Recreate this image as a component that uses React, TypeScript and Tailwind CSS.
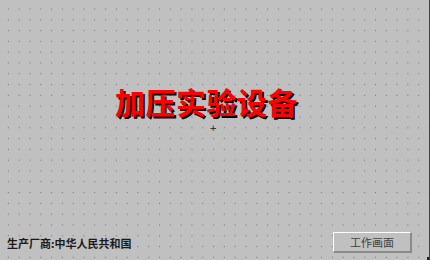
export default function App() {
  return (
    <div
      className="relative w-[430px] h-[260px] flex flex-col bg-[#c0c0c0] border-r border-[#404040] bg-[radial-gradient(circle,#777_0.6px,transparent_1px)] bg-[length:10.8px_10.8px] bg-[position:3px_3.6px] overflow-hidden"
      style={{ fontFamily: '"Liberation Sans", "Noto Sans CJK SC", sans-serif' }}
    >
      <div className="pt-[83px] pl-[115px]">
        <h1
          className="text-[30px] leading-[36px] font-bold text-[#ff0000] tracking-[0.5px] [text-shadow:2px_2px_0_#000]"
          style={{ fontFamily: '"Noto Sans CJK SC", sans-serif' }}
        >
          加压实验设备
        </h1>
      </div>
      <div className="mt-[4px] pl-[210px] text-[11px] leading-[11px] text-[#333]">+</div>

      <div className="mt-auto flex items-center justify-between pl-[7px] pr-[17px] pb-[7px]">
        <span
          className="text-[11px] leading-[12px] font-bold text-[#1a1a1a]"
          style={{ fontFamily: '"Noto Sans CJK SC", sans-serif' }}
        >
          生产厂商:中华人民共和国
        </span>
        <button
          className="w-[79px] h-[21px] bg-[#c0c0c0] border-t border-l border-white border-b-2 border-r-2 border-b-[#8a8a8a] border-r-[#8a8a8a] text-[11px] leading-[12px] text-[#404040]"
          style={{ fontFamily: '"Noto Sans CJK SC", sans-serif' }}
        >
          工作画面
        </button>
      </div>
      <div className="absolute right-0 bottom-0 w-[2px] h-[3px] bg-[#202020]" />
    </div>
  );
}
